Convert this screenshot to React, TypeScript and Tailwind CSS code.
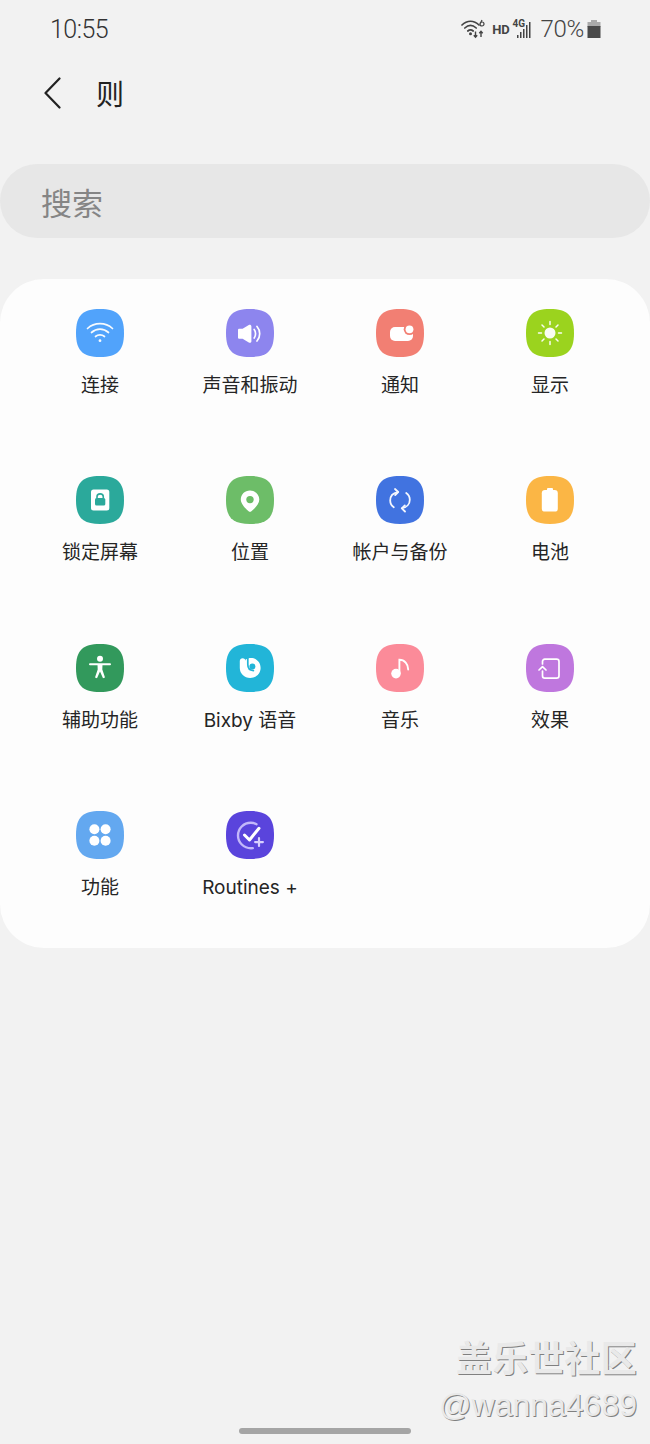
import React from 'react'

const SQUIRCLE = 'M24 0C41.5 0 48 6.5 48 24C48 41.5 41.5 48 24 48C6.5 48 0 41.5 0 24C0 6.5 6.5 0 24 0Z'

function Tile({ color, children }: { color: string; children: React.ReactNode }) {
  return (
    <svg width="48" height="48" viewBox="0 0 48 48" fill="none">
      <path d={SQUIRCLE} fill={color} />
      {children}
    </svg>
  )
}

const items: { label: string; color: string; glyph: React.ReactNode }[] = [
  {
    label: '连接',
    color: '#51a3fb',
    glyph: (
      <g stroke="#fff" strokeWidth="1.7" strokeLinecap="round" opacity="0.95">
        <path d="M11.5 19.5C18.5 13 29.5 13 36.5 19.5" />
        <path d="M15.5 23.5C20.5 19 27.5 19 32.5 23.5" />
        <path d="M19.5 27.5C22 25.3 26 25.3 28.5 27.5" />
        <circle cx="24" cy="31.7" r="1.4" fill="#fff" stroke="none" />
      </g>
    ),
  },
  {
    label: '声音和振动',
    color: '#8d85ee',
    glyph: (
      <g>
        <path d="M12 21C12 20.2 12.6 19.7 13.4 19.7H16.6L22.8 16C24 15.4 25.4 16.1 25.4 17.4V32.2C25.4 33.6 24 34.3 22.8 33.6L16.6 29.8H13.4C12.6 29.8 12 29.3 12 28.5Z" fill="#fff" />
        <path d="M28.2 20.5C30 22.8 30 26.6 28.2 29M31 17.5C34.6 21.6 34.6 27.8 31 32" stroke="#fff" strokeWidth="1.7" strokeLinecap="round" />
      </g>
    ),
  },
  {
    label: '通知',
    color: '#f27f73',
    glyph: (
      <g>
        <rect x="14" y="18" width="23" height="14" rx="5" fill="#fff" />
        <circle cx="33.5" cy="20.3" r="5.8" fill="#f27f73" />
        <circle cx="33.5" cy="20.3" r="3.9" fill="#fff" />
      </g>
    ),
  },
  {
    label: '显示',
    color: '#9bd31e',
    glyph: (
      <g stroke="#fff" strokeWidth="1.5" strokeLinecap="round" opacity="0.95">
        <circle cx="24" cy="24" r="5.5" fill="#fff" stroke="none" />
        <path d="M24 12.5V15.5M24 32.5V35.5M12.5 24H15.5M32.5 24H35.5M16 16L18 18M30 30L32 32M32 16L30 18M18 30L16 32" />
      </g>
    ),
  },
  {
    label: '锁定屏幕',
    color: '#2ba99b',
    glyph: (
      <g>
        <rect x="15" y="13.5" width="18.3" height="21" rx="2.5" fill="#fff" />
        <rect x="19" y="22" width="10.3" height="7.6" rx="1.6" fill="#2ba99b" />
        <path d="M21 22.5V20.8C21 16.9 27.3 16.9 27.3 20.8V22.5" stroke="#2ba99b" strokeWidth="1.6" />
      </g>
    ),
  },
  {
    label: '位置',
    color: '#6dbd68',
    glyph: (
      <g>
        <path d="M24 14.6C29.2 14.6 33.3 18.5 33.3 23.6C33.3 28 28.6 32.6 25.4 35.2C24.6 35.9 23.4 35.9 22.6 35.2C19.4 32.6 14.8 28 14.8 23.6C14.8 18.5 18.8 14.6 24 14.6Z" fill="#fff" />
        <circle cx="24" cy="23.6" r="3.7" fill="#6dbd68" />
      </g>
    ),
  },
  {
    label: '帐户与备份',
    color: '#4173e0',
    glyph: (
      <g stroke="#fff" strokeWidth="1.8" strokeLinecap="round" strokeLinejoin="round" opacity="0.95">
        <path d="M21.8 16.2C17.3 17 14.2 20.2 14.2 24.6C14.2 27.3 15.5 29.8 17.8 31.3" />
        <path d="M19 13L22.2 16L19.2 19" />
        <path d="M26.2 32.2C30.7 31.4 33.8 28 33.8 23.7C33.8 21 32.5 18.6 30.2 17" />
        <path d="M29 35.5L25.8 32.4L28.8 29.4" />
      </g>
    ),
  },
  {
    label: '电池',
    color: '#fbb645',
    glyph: (
      <g fill="#fff">
        <rect x="21" y="12" width="6" height="3" rx="1" />
        <rect x="15.8" y="14" width="16" height="21.6" rx="3.2" />
      </g>
    ),
  },
  {
    label: '辅助功能',
    color: '#32995c',
    glyph: (
      <g>
        <circle cx="24" cy="14.8" r="3" fill="#fff" />
        <path d="M14 20.2H34" stroke="#fff" strokeWidth="2" strokeLinecap="round" />
        <path d="M21.5 20.5H26.5L26.3 25.5L29 33.5L27 34.2L24 27.5L21 34.2L19 33.5L21.7 25.5Z" fill="#fff" />
      </g>
    ),
  },
  {
    label: 'Bixby 语音',
    color: '#22b5d8',
    glyph: (
      <g>
        <path d="M13.8 17C13.8 15.4 15 14.2 16.6 14.2C18.2 14.2 19.6 15.4 19.6 17V15.5C21 14.6 23 14 25 14C30.6 14 34.6 18.4 34.6 24C34.6 29.6 30 34 24.2 34C18.4 34 13.8 29.6 13.8 24Z" fill="#fff" />
        <path d="M21.8 13V20.5C21.8 24 24 26.4 27.4 26.6" stroke="#22b5d8" strokeWidth="1.7" strokeLinecap="round" />
        <circle cx="26.4" cy="22.6" r="3" fill="#22b5d8" />
      </g>
    ),
  },
  {
    label: '音乐',
    color: '#fb8b99',
    glyph: (
      <g>
        <circle cx="20" cy="29.6" r="4.8" fill="#fff" />
        <path d="M23.4 29.6V15.8C28.5 15.8 32.2 20 32.2 25.5" stroke="#fff" strokeWidth="1.9" strokeLinecap="round" />
      </g>
    ),
  },
  {
    label: '效果',
    color: '#bf77de',
    glyph: (
      <g stroke="#fff" strokeWidth="1.7" strokeLinecap="round" strokeLinejoin="round">
        <path d="M16.5 20V17.5C16.5 16 17.5 15.2 18.8 15.2H30.5C32 15.2 33 16 33 17.5V31.8C33 33.2 32 34.2 30.5 34.2H18.8C17.5 34.2 16.5 33.2 16.5 31.8V27" />
        <path d="M13 26L16.5 22.7L20 26" />
      </g>
    ),
  },
  {
    label: '功能',
    color: '#63a8f0',
    glyph: (
      <g fill="#fff">
        <circle cx="18.4" cy="18.3" r="5" />
        <circle cx="29.6" cy="18.3" r="5" />
        <circle cx="18.4" cy="29.7" r="5" />
        <circle cx="29.6" cy="29.7" r="5" />
      </g>
    ),
  },
  {
    label: 'Routines +',
    color: '#5a44dc',
    glyph: (
      <g strokeLinecap="round" strokeLinejoin="round">
        <path d="M30.5 13.2C28.8 12.3 26.8 11.8 24.8 11.8C17.6 11.8 12 17.4 12 24.5C12 31.6 17.8 37.2 25 37.2C25.6 37.2 26.2 37.2 26.8 37.1" stroke="#c3b8fa" strokeWidth="2.4" />
        <path d="M18.5 24L23.5 29L33 17.3" stroke="#fff" strokeWidth="3" />
        <path d="M33 27.2V35M29.1 31.1H36.9" stroke="#d8d0ff" strokeWidth="2.2" />
      </g>
    ),
  },
]

function StatusIcons() {
  return (
    <div className="flex items-center text-[#444]">
      <svg width="26" height="20" viewBox="0 0 26 20" fill="none">
        <g stroke="#444" strokeWidth="1.7" strokeLinecap="round">
          <path d="M1 6C6 1 13 1 18 6" />
          <path d="M3.8 9C7.5 5.5 11.5 5.5 15.2 9" />
          <path d="M6.8 12C8.6 10.4 10.4 10.4 12.2 12" />
        </g>
        <circle cx="9.5" cy="14.8" r="1.5" fill="#444" />
        <path d="M14.5 12.5V18M12.8 16.3L14.5 18.2L16.2 16.3" stroke="#444" strokeWidth="1.4" />
        <path d="M20 18V12.5M18.3 14.2L20 12.3L21.7 14.2" stroke="#444" strokeWidth="1.4" />
        <circle cx="21" cy="5" r="2" stroke="#444" strokeWidth="1.2" />
        <path d="M21 1L19.3 4.5" stroke="#444" strokeWidth="1.2" />
      </svg>
      <span className="ml-[5px] text-[13px] leading-none font-bold font-['Roboto',sans-serif] tracking-[-0.2px]">HD</span>
      <div className="relative ml-[3px] h-[20px] w-[20px]">
        <span className="absolute left-0 top-0 text-[10px] leading-[10px] font-bold font-['Roboto',sans-serif]">4G</span>
        <svg className="absolute left-0 top-0" width="20" height="20" viewBox="0 0 20 20" fill="#444">
          <rect x="4" y="16" width="1.5" height="3" />
          <rect x="7" y="13" width="1.5" height="6" />
          <rect x="10" y="10" width="1.5" height="9" />
          <rect x="13" y="6" width="1.5" height="13" />
          <rect x="16" y="3" width="1.5" height="16" />
        </svg>
      </div>
      <span className="ml-[8px] text-[24px] leading-none font-light font-['Roboto',sans-serif] tracking-[-0.3px]">70%</span>
      <svg className="ml-[3px]" width="14" height="18" viewBox="0 0 14 18">
        <rect x="4" y="0" width="6" height="3" fill="#aaa" />
        <rect x="0.5" y="2" width="13" height="5" fill="#aaa" />
        <rect x="0.5" y="6" width="13" height="12" fill="#4a4a4a" />
      </svg>
    </div>
  )
}

export default function App() {
  return (
    <div className="relative h-[1444px] w-[650px] overflow-hidden bg-[#f2f2f2] font-['Inter','Noto_Sans_CJK_SC',sans-serif]">
      {/* status bar */}
      <div className="flex h-[58px] items-center justify-between pl-[50px] pr-[49px]">
        <span className="font-['Roboto',sans-serif] text-[25px] leading-none font-light tracking-[-0.5px] text-[#333]">10:55</span>
        <StatusIcons />
      </div>

      {/* title row */}
      <div className="flex h-[70px] items-center pl-[44px]">
        <svg width="18" height="32" viewBox="0 0 18 32" fill="none">
          <path d="M15.5 1.5L1.5 16L15.5 30.5" stroke="#222" strokeWidth="2.2" strokeLinecap="round" strokeLinejoin="round" />
        </svg>
        <h1 className="ml-[34px] mt-[4px] text-[28px] leading-none font-normal text-[#222]">则</h1>
      </div>

      {/* search */}
      <div className="mt-[36px] flex h-[74px] items-center rounded-full bg-[#e7e7e7] pl-[41px]">
        <span className="mt-[4px] text-[31px] leading-none text-[#858585]">搜索</span>
      </div>

      {/* settings card */}
      <div className="mt-[41px] grid h-[669px] grid-cols-4 content-start rounded-[44px] bg-[#fdfdfd] px-[25px] pt-[30px]">
        {items.map((item) => (
          <div key={item.label} className="flex h-[167.3px] flex-col items-center">
            <Tile color={item.color}>{item.glyph}</Tile>
            <span className="mt-[15px] whitespace-nowrap text-[19px] leading-[28px] text-[#252525]">{item.label}</span>
          </div>
        ))}
      </div>

      {/* watermark */}
      <div className="absolute right-[13px] top-[1336px] flex flex-col items-end text-[#e9e9e9] [text-shadow:1px_1px_0_#808080]">
        <span className="text-[36px] leading-[46px] font-bold tracking-[0.2px]">盖乐世社区</span>
        <span className="mt-[3px] text-[32px] leading-[40px] font-['Liberation_Sans',sans-serif]">@wanna4689</span>
      </div>

      {/* gesture bar */}
      <div className="absolute bottom-[10px] left-[239px] h-[6px] w-[172px] rounded-full bg-[#a5a5a5]" />
    </div>
  )
}
